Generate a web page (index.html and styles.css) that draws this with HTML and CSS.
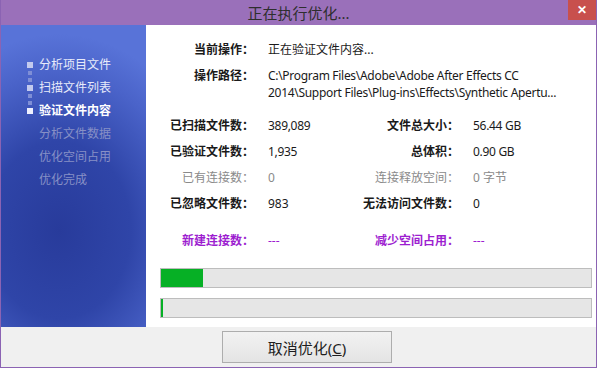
FILE: index.html
```html
<!DOCTYPE html>
<html lang="zh-CN">
<head>
  <meta charset="UTF-8" />
  <title>正在执行优化...</title>
  <link rel="stylesheet" href="styles.css">
</head>
<body>
  <div class="janela">
    <div class="barra-titulo">
      <span></span>
      <div class="titulo">正在执行优化...</div>
      <div class="fechar">✕</div>
    </div>

    <div class="corpo">
      <ul class="etapas">
        <li class="etapa feito">分析项目文件</li>
        <li class="etapa feito">扫描文件列表</li>
        <li class="etapa ativo">验证文件内容</li>
        <li class="etapa">分析文件数据</li>
        <li class="etapa">优化空间占用</li>
        <li class="etapa">优化完成</li>
      </ul>

      <div class="conteudo">
        <div class="grade topo">
          <div class="rotulo">当前操作：</div>
          <div class="valor largo">正在验证文件内容...</div>
          <div class="rotulo">操作路径：</div>
          <div class="valor largo latino">C:\Program Files\Adobe\Adobe After Effects CC<br>2014\Support Files\Plug-ins\Effects\Synthetic Apertu...</div>
        </div>

        <div class="grade stats">
          <div class="rotulo">已扫描文件数：</div>
          <div class="valor latino">389,089</div>
          <div class="rotulo">文件总大小：</div>
          <div class="valor latino">56.44 GB</div>

          <div class="rotulo">已验证文件数：</div>
          <div class="valor latino">1,935</div>
          <div class="rotulo">总体积：</div>
          <div class="valor latino">0.90 GB</div>

          <div class="rotulo cinza">已有连接数：</div>
          <div class="valor cinza">0</div>
          <div class="rotulo cinza">连接释放空间：</div>
          <div class="valor cinza">0 字节</div>

          <div class="rotulo">已忽略文件数：</div>
          <div class="valor">983</div>
          <div class="rotulo">无法访问文件数：</div>
          <div class="valor">0</div>
        </div>

        <div class="grade roxo">
          <div class="rotulo">新建连接数：</div>
          <div class="valor">---</div>
          <div class="rotulo">减少空间占用：</div>
          <div class="valor">---</div>
        </div>

        <div class="progresso"><div class="preenche" style="width: 42px"></div></div>
        <div class="progresso segundo"><div class="preenche" style="width: 2px"></div></div>
      </div>
    </div>

    <div class="rodape">
      <button class="botao">取消优化(<u>C</u>)</button>
    </div>
  </div>
</body>
</html>
```

FILE: styles.css
```css
body {
  margin: 0;
  background-color: #fff;
  font-family: "Noto Sans", "Noto Sans CJK SC", sans-serif;
  font-size: 12px;
  color: #1a1a1a;
}

.janela {
  width: 597px;
  height: 368px;
  box-sizing: border-box;
  border: 1px solid #8b63b3;
  border-top: none;
  display: flex;
  flex-direction: column;
}

.barra-titulo {
  height: 25px;
  background-color: #9a70ba;
  display: grid;
  grid-template-columns: 28px 1fr 28px;
  align-items: start;
}

.titulo {
  font-size: 15px;
  line-height: 26px;
  text-align: center;
  color: #2e2e2e;
}

.fechar {
  height: 20px;
  background-color: #c8504d;
  color: #fff;
  font-size: 12px;
  font-weight: bold;
  line-height: 20px;
  text-align: center;
}

.corpo {
  flex: 1;
  display: flex;
}

.etapas {
  width: 145px;
  margin: 0;
  padding: 28px 0 0 26px;
  box-sizing: border-box;
  list-style: none;
  background: radial-gradient(ellipse 110% 65% at 40% 68%, #283b9b 0%, #2f45a8 45%, #4a63c9 80%, #5873d8 100%);
}

.etapa {
  height: 23px;
  line-height: 23px;
  padding-left: 12px;
  display: flex;
  align-items: center;
  color: #8790c6;
}

.etapa.feito,
.etapa.ativo {
  color: #e8ebfa;
  padding-left: 0;
}

.etapa.ativo {
  color: #fff;
  font-weight: bold;
}

.etapa.feito::before,
.etapa.ativo::before {
  content: "";
  width: 6px;
  height: 6px;
  margin-right: 6px;
  flex-shrink: 0;
  background-color: #c3caee;
}

.etapa.feito::before {
  box-shadow: 0 8px 0 -1px #7f8fd6, 0 15px 0 -1px #7f8fd6;
}

.etapa.ativo::before {
  background-color: #eef0ff;
}

.conteudo {
  flex: 1;
  padding: 16px 4px 0 0;
  display: flex;
  flex-direction: column;
}

.grade {
  display: grid;
  grid-template-columns: 108px 86px 119px 1fr;
  row-gap: 9px;
  line-height: 17px;
}

.rotulo {
  text-align: right;
  font-weight: bold;
  white-space: nowrap;
}

.valor {
  padding-left: 14px;
  white-space: nowrap;
}

.valor.largo {
  grid-column: 2 / 5;
}

.latino {
  letter-spacing: -0.3px;
}

.stats {
  margin-top: 16px;
}

.cinza {
  color: #8a8a8a;
  font-weight: normal;
}

.roxo {
  margin-top: 20px;
  color: #9d1ed0;
}

.progresso {
  margin: 19px 0 0 14px;
  height: 20px;
  box-sizing: border-box;
  border: 1px solid #bdbdbd;
  background-color: #e6e6e6;
  display: flex;
}

.progresso.segundo {
  margin-top: 10px;
}

.preenche {
  background-color: #06b025;
}

.rodape {
  height: 40px;
  background-color: #f0f0f0;
  padding: 4px 0 0 221px;
  box-sizing: border-box;
}

.botao {
  width: 170px;
  height: 32px;
  border: 1px solid #adadad;
  background: linear-gradient(#f2f2f2, #e4e4e4);
  font-family: "Noto Sans", "Noto Sans CJK SC", sans-serif;
  font-size: 15px;
  color: #1e1e1e;
  padding: 0;
}
```
